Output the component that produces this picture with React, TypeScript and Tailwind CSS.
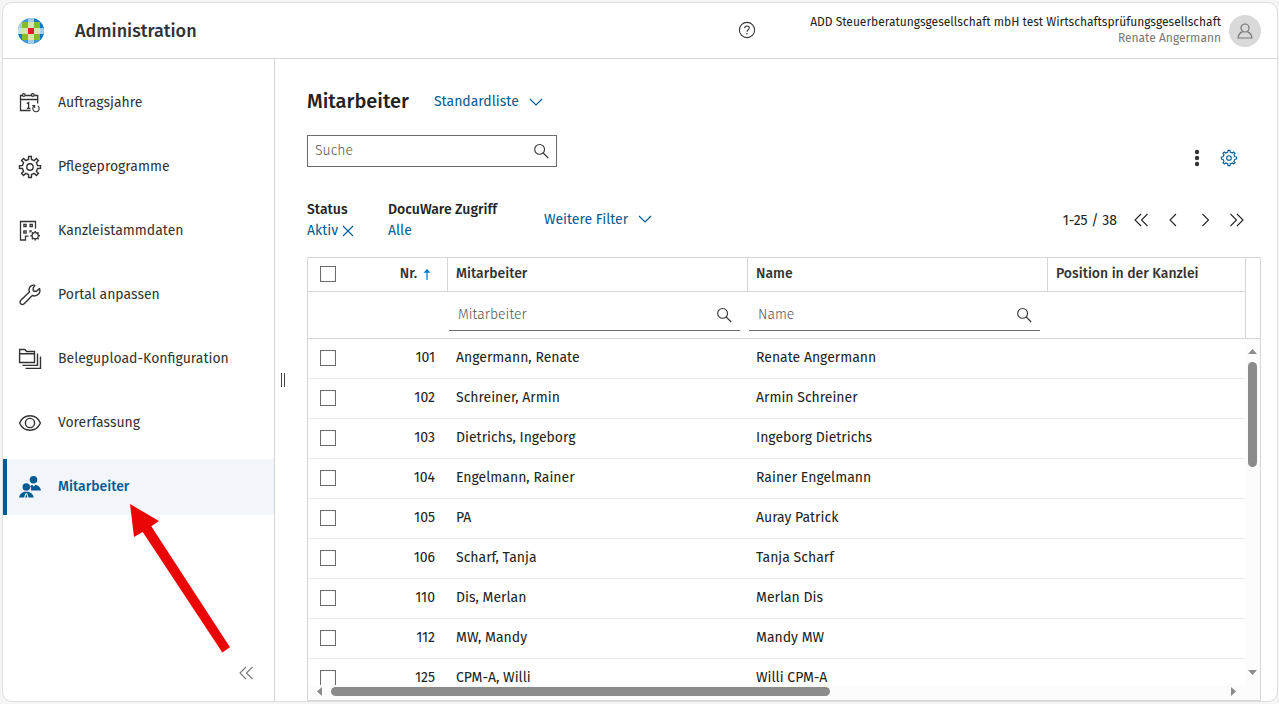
import type { ReactNode } from "react";

type IconProps = { className?: string };

function gearPath(cx: number, cy: number, outer: number, inner: number, teeth = 8) {
  const step = (Math.PI * 2) / teeth;
  const points: string[] = [];
  for (let i = 0; i < teeth; i++) {
    const a = i * step - Math.PI / 2;
    const corners: [number, number][] = [
      [a - step * 0.25, inner],
      [a - step * 0.17, outer],
      [a + step * 0.17, outer],
      [a + step * 0.25, inner],
    ];
    for (const [angle, r] of corners) {
      points.push(`${(cx + Math.cos(angle) * r).toFixed(2)} ${(cy + Math.sin(angle) * r).toFixed(2)}`);
    }
  }
  return `M${points.join("L")}Z`;
}

function Svg({ children, className, box = 24, stroke = 1.4 }: IconProps & { children: ReactNode; box?: number; stroke?: number }) {
  return (
    <svg
      viewBox={`0 0 ${box} ${box}`}
      className={className}
      fill="none"
      stroke="currentColor"
      strokeWidth={stroke}
      aria-hidden="true"
    >
      {children}
    </svg>
  );
}

const CalendarIcon = () => (
  <Svg className="size-6 shrink-0" stroke={1.3}>
    <path d="M12.5 19.5H2.5V4.5H4.2M7.3 4.5H13.2M16.3 4.5H19.7V12.5M2.5 8.5H19.7" />
    <circle cx="5.8" cy="4" r="1.4" />
    <circle cx="14.8" cy="4" r="1.4" />
    <path d="M8.8 12.6L10.6 11.6V17.3M8.8 17.3H12.4" />
    <path d="M19.8 14.9A3.2 3.2 0 1 1 15.8 15.2M14.2 14.5H16.6V17" strokeWidth="1.1" />
  </Svg>
);

const GearIcon = () => (
  <Svg className="size-6 shrink-0" stroke={1.4}>
    <path d={gearPath(12, 12, 10.6, 7.7)} />
    <circle cx="12" cy="12" r="3.2" />
  </Svg>
);

const BuildingIcon = () => (
  <Svg className="size-6 shrink-0" stroke={1.3}>
    <path d="M17.5 9.8V2.5H2.5V21H7.5V17.2H10.5" />
    <path d="M5.9 5.5H8.1V7.7H5.9ZM12.1 5.5H14.3V7.7H12.1ZM5.9 11.9H8.1V14.1H5.9Z" />
    <path d="M12 13.6V12H13.8" />
    <circle cx="17.2" cy="16.8" r="3.1" strokeWidth="1.2" />
    <path
      d="M17.2 12V13.6M17.2 20V21.6M12.4 16.8H14M20.4 16.8H22M13.8 13.4L15 14.6M19.4 19L20.6 20.2M20.6 13.4L19.4 14.6M15 19L13.8 20.2"
      strokeWidth="1.5"
    />
  </Svg>
);

const WrenchIcon = () => (
  <Svg className="size-6 shrink-0">
    <path
      strokeLinejoin="round"
      d="M16.8 2.3C13.8 1.6 11 3.8 11 6.8C11 7.6 11.1 8.3 11.4 8.9L3 17.1C1.8 18.3 1.8 19.9 2.7 20.8C3.7 21.8 5.3 21.7 6.4 20.6L14.3 12.5C17.6 13.8 21.4 11.9 21.9 8.3C22 7.3 21.9 6.4 21.5 5.6L18.6 8.3H16L15.2 7.5V5Z"
    />
  </Svg>
);

const FoldersIcon = () => (
  <Svg className="size-6 shrink-0">
    <path d="M1.6 15.5V2.5H7L8.5 4.5H16.5V15.5ZM1.6 6.8H16.5" />
    <path d="M4.5 18.4H19.5V6.5M7.5 21.4H22.5V9.5" />
  </Svg>
);

const EyeIcon = () => (
  <Svg className="size-6 shrink-0">
    <path d="M1.6 12C3.5 7.5 7.5 4.8 12 4.8S20.5 7.5 22.4 12C20.5 16.5 16.5 19.2 12 19.2S3.5 16.5 1.6 12Z" />
    <circle cx="12" cy="12" r="4.6" />
  </Svg>
);

const PeopleIcon = () => (
  <svg viewBox="0 0 24 24" className="size-6 shrink-0" fill="currentColor" aria-hidden="true">
    <circle cx="15.5" cy="4.7" r="3.8" />
    <circle cx="8.3" cy="12" r="3.8" />
    <path d="M13 15.5C13.2 13.2 12.8 11.8 12.2 10.9L14.2 9.7L15.8 11.6L17.4 9.7C20.4 10.5 22.6 12.4 23 15.5Z" />
    <path d="M1 22.5C1.4 19.5 3.6 17.4 6.5 16.8H10.2C13.1 17.4 15.3 19.5 15.7 22.5H10.6L9.6 19.2L8.3 17.8L7 19.2L6.2 22.5Z" />
    <path d="M8.3 18.8L9.4 22.5H7.3Z" />
  </svg>
);

const SearchIcon = () => (
  <Svg className="size-4 shrink-0 text-[#333]" box={16} stroke={1.1}>
    <circle cx="6.6" cy="6.4" r="4.9" />
    <path d="M10.2 10L15.2 15" />
  </Svg>
);

const ChevronDown = () => (
  <Svg className="size-3.5 shrink-0" box={14} stroke={1.2}>
    <path d="M1 4L7 10L13 4" />
  </Svg>
);

const DoubleLeft = () => (
  <Svg className="size-4" box={16} stroke={1.1}>
    <path d="M8 2L2 8L8 14M14.5 2L8.5 8L14.5 14" />
  </Svg>
);
const DoubleRight = () => (
  <Svg className="size-4" box={16} stroke={1.1}>
    <path d="M1.5 2L7.5 8L1.5 14M8 2L14 8L8 14" />
  </Svg>
);
const Left = () => (
  <Svg className="size-4" box={16} stroke={1.1}>
    <path d="M11 2L5 8L11 14" />
  </Svg>
);
const Right = () => (
  <Svg className="size-4" box={16} stroke={1.1}>
    <path d="M5.5 2L11.5 8L5.5 14" />
  </Svg>
);

function Logo() {
  return (
    <svg viewBox="0 0 26 26" className="size-[26px]" role="img" aria-label="Logo">
      <defs>
        <clipPath id="logo-clip">
          <circle cx="13" cy="13" r="13" />
        </clipPath>
      </defs>
      <g clipPath="url(#logo-clip)">
        <rect width="26" height="26" fill="#4298d6" />
        <path d="M16 0H22V4H16ZM22 4H26V10H22ZM22 16H26V22H22ZM0 16H4V22H0Z" fill="#0a7bc6" />
        <path d="M10 0H16V4H10ZM0 4H4V10H0ZM22 10H26V16H22ZM10 22H16V26H10Z" fill="#a3cdec" />
        <path d="M0 10H4V16H0Z" fill="#c9e0f2" />
        <path d="M4 4H22V22H4Z" fill="#86bc25" />
        <path d="M10 4H16V22H10ZM4 10H22V16H4Z" fill="#d2e6ae" />
        <path d="M10 10H16V16H10Z" fill="#e9192d" />
      </g>
    </svg>
  );
}

const navItems = [
  { label: "Auftragsjahre", icon: <CalendarIcon /> },
  { label: "Pflegeprogramme", icon: <GearIcon /> },
  { label: "Kanzleistammdaten", icon: <BuildingIcon /> },
  { label: "Portal anpassen", icon: <WrenchIcon /> },
  { label: "Belegupload-Konfiguration", icon: <FoldersIcon /> },
  { label: "Vorerfassung", icon: <EyeIcon /> },
  { label: "Mitarbeiter", icon: <PeopleIcon />, active: true },
];

const rows = [
  ["101", "Angermann, Renate", "Renate Angermann"],
  ["102", "Schreiner, Armin", "Armin Schreiner"],
  ["103", "Dietrichs, Ingeborg", "Ingeborg Dietrichs"],
  ["104", "Engelmann, Rainer", "Rainer Engelmann"],
  ["105", "PA", "Auray Patrick"],
  ["106", "Scharf, Tanja", "Tanja Scharf"],
  ["110", "Dis, Merlan", "Merlan Dis"],
  ["112", "MW, Mandy", "Mandy MW"],
  ["125", "CPM-A, Willi", "Willi CPM-A"],
];

const Checkbox = ({ label }: { label: string }) => (
  <input type="checkbox" aria-label={label} className="block size-4 appearance-none border border-[#6b6b6b] bg-white" />
);

const ColumnFilter = ({ label }: { label: string }) => (
  <label className="ml-px mr-2 flex h-8 items-center border-b border-[#6b6b6b] pl-[9px] pr-2">
    <input
      type="text"
      aria-label={`Filter ${label}`}
      placeholder={label}
      className="min-w-0 flex-1 bg-transparent outline-none placeholder:font-light placeholder:text-[#555]"
    />
    <SearchIcon />
  </label>
);

export default function App() {
  return (
    <div className="h-screen bg-[#f5f5f5] py-0.5 pl-0.5 pr-px font-['Fira_Sans','Noto_Sans',sans-serif] text-sm text-[#222]">
      <div className="flex h-full flex-col overflow-hidden rounded-[10px] border border-[#dedede] bg-white">
        <header className="flex h-14 shrink-0 items-center border-b border-[#d6d6d6] pl-[15px] pr-4">
          <Logo />
          <h1 className="ml-[31px] flex-1 text-lg font-medium text-[#333]">Administration</h1>
          <button type="button" aria-label="Hilfe" className="pb-0.5 text-[#333]">
            <Svg className="size-[18px]" box={18} stroke={1.1}>
              <circle cx="9" cy="9" r="7.6" />
              <path d="M6.7 7.2C6.7 4.2 11.3 4.3 11.3 7C11.3 8.8 9 8.8 9 10.8M9 12V13.4" />
            </Svg>
          </button>
          <div className="w-[465px] pb-0.5 text-right text-xs leading-4">
            <div>ADD Steuerberatungsgesellschaft mbH test Wirtschaftsprüfungsgesellschaft</div>
            <div className="text-[#777]">Renate Angermann</div>
          </div>
          <button
            type="button"
            aria-label="Benutzerkonto"
            className="ml-2 flex size-8 items-center justify-center rounded-full bg-[#d9d9d9] text-[#777]"
          >
            <Svg className="size-4" box={16} stroke={1.2}>
              <circle cx="8" cy="5" r="4" />
              <path d="M5.8 8.6C3.2 9.6 1.4 11.6 1 15H15C14.6 11.6 12.8 9.6 10.2 8.6" />
            </Svg>
          </button>
        </header>

        <div className="flex min-h-0 flex-1">
          <aside className="relative flex w-[272px] shrink-0 flex-col border-r border-[#d6d6d6] pt-4">
            <nav className="flex flex-col gap-2">
              {navItems.map((item) => (
                <a
                  key={item.label}
                  href="#"
                  aria-current={item.active ? "page" : undefined}
                  className={
                    item.active
                      ? "flex h-14 items-center gap-4 border-l-4 border-[#005b94] bg-[#f2f6fb] pl-[11px] font-medium text-[#005b94]"
                      : "flex h-14 items-center gap-4 border-l-4 border-transparent pl-[11px] text-[#333]"
                  }
                >
                  {item.icon}
                  <span>{item.label}</span>
                </a>
              ))}
            </nav>
            <button type="button" aria-label="Menü einklappen" className="mb-5 ml-auto mr-5 mt-auto text-[#777]">
              <DoubleLeft />
            </button>
            <svg
              viewBox="0 0 100 150"
              className="pointer-events-none absolute left-[127px] top-[445px] h-[150px] w-[100px]"
              aria-hidden="true"
            >
              <path d="M0 0L29 17L21.3 22.3L100 143.3L92.3 148.5L12.7 28L4 33Z" fill="#ea0606" />
            </svg>
          </aside>

          <div className="flex w-8 shrink-0 items-center gap-0.5 pl-1.5" role="separator" aria-orientation="vertical">
            <span className="h-3.5 w-px bg-[#444]" />
            <span className="h-3.5 w-px bg-[#444]" />
          </div>

          <main className="flex min-w-0 flex-1 flex-col pr-4 pt-[30px]">
            <div className="flex h-6 items-center gap-[25px]">
              <h2 className="text-xl font-medium">Mitarbeiter</h2>
              <button type="button" className="flex items-center gap-2.5 pt-0.5 text-[#005b94]">
                Standardliste
                <ChevronDown />
              </button>
            </div>

            <div className="mt-[22px] flex items-end justify-between">
              <label className="flex h-8 w-[250px] items-center border border-[#6b6b6b] px-[7px]">
                <input
                  type="search"
                  aria-label="Suche"
                  placeholder="Suche"
                  className="min-w-0 flex-1 bg-transparent outline-none placeholder:font-light placeholder:text-[#555]"
                />
                <SearchIcon />
              </label>
              <div className="flex gap-3.5 pr-[23px]">
                <button type="button" aria-label="Weitere Aktionen">
                  <svg viewBox="0 0 18 18" className="size-[18px]" fill="#333" aria-hidden="true">
                    <circle cx="9" cy="3" r="2.2" />
                    <circle cx="9" cy="9" r="2.2" />
                    <circle cx="9" cy="15" r="2.2" />
                  </svg>
                </button>
                <button type="button" aria-label="Einstellungen" className="text-[#005b94]">
                  <Svg className="size-[18px]" box={18} stroke={1.1}>
                    <path d={gearPath(9, 9, 7.7, 6)} />
                    <circle cx="9" cy="9" r="2.3" />
                  </Svg>
                </button>
              </div>
            </div>

            <div className="mt-8 flex items-center leading-[21px]">
              <div className="w-[81px]">
                <div className="font-medium">Status</div>
                <button type="button" className="flex items-center gap-1 text-[#005b94]">
                  Aktiv
                  <Svg className="size-3" box={12} stroke={1.1}>
                    <path d="M1 1L11 11M11 1L1 11" />
                  </Svg>
                </button>
              </div>
              <div className="w-[156px]">
                <div className="font-medium">DocuWare Zugriff</div>
                <button type="button" className="block text-[#005b94]">
                  Alle
                </button>
              </div>
              <button type="button" className="flex items-center gap-2.5 pb-0.5 text-[#005b94]">
                Weitere Filter
                <ChevronDown />
              </button>
              <div className="ml-auto flex items-center gap-4 pr-4">
                <span>1-25 / 38</span>
                <button type="button" aria-label="Erste Seite">
                  <DoubleLeft />
                </button>
                <button type="button" aria-label="Vorherige Seite">
                  <Left />
                </button>
                <button type="button" aria-label="Nächste Seite">
                  <Right />
                </button>
                <button type="button" aria-label="Letzte Seite">
                  <DoubleRight />
                </button>
              </div>
            </div>

            <div className="mt-4 flex min-h-0 flex-1 flex-col border border-[#d6d6d6]">
              <div className="flex min-h-0 flex-1">
                <div className="min-w-0 flex-1 overflow-hidden">
                  <table className="w-full table-fixed border-separate border-spacing-0 text-left">
                    <colgroup>
                      <col className="w-10" />
                      <col className="w-[100px]" />
                      <col className="w-[300px]" />
                      <col className="w-[300px]" />
                      <col />
                    </colgroup>
                    <thead className="text-[#333]">
                      <tr className="h-[34px]">
                        <th className="border-b border-[#d6d6d6] pb-0.5 pl-3">
                          <Checkbox label="Alle auswählen" />
                        </th>
                        <th className="border-b border-r border-[#d6d6d6] pb-0.5 pr-3.5 font-medium">
                          <span className="flex items-center justify-end gap-1">
                            Nr.
                            <svg viewBox="0 0 12 12" className="size-3" aria-hidden="true">
                              <path d="M6 1L9.5 4.7H6.6V12H5.4V4.7H2.5Z" fill="#007ac2" />
                            </svg>
                          </span>
                        </th>
                        <th className="border-b border-r border-[#d6d6d6] pb-0.5 pl-2 font-medium">Mitarbeiter</th>
                        <th className="border-b border-r border-[#d6d6d6] pb-0.5 pl-2 font-medium">Name</th>
                        <th className="border-b border-[#d6d6d6] pb-0.5 pl-2 font-medium">Position in der Kanzlei</th>
                      </tr>
                      <tr className="h-[47px]">
                        <td className="border-b border-[#d6d6d6]" colSpan={2} />
                        <td className="border-b border-[#d6d6d6]">
                          <ColumnFilter label="Mitarbeiter" />
                        </td>
                        <td className="border-b border-[#d6d6d6]">
                          <ColumnFilter label="Name" />
                        </td>
                        <td className="border-b border-[#d6d6d6]" />
                      </tr>
                    </thead>
                    <tbody>
                      {rows.map(([nr, employee, name]) => (
                        <tr key={nr} className="h-10">
                          <td className="border-b border-[#ebebeb] pb-0.5 pl-3">
                            <Checkbox label={`${employee} auswählen`} />
                          </td>
                          <td className="border-b border-[#ebebeb] pb-0.5 pr-[13px] text-right">{nr}</td>
                          <td className="border-b border-[#ebebeb] pb-0.5 pl-2">{employee}</td>
                          <td className="border-b border-[#ebebeb] pb-0.5 pl-2">{name}</td>
                          <td className="border-b border-[#ebebeb]" />
                        </tr>
                      ))}
                    </tbody>
                  </table>
                </div>
                <div className="flex w-[15px] shrink-0 flex-col">
                  <div className="h-[81px] shrink-0 border-b border-l border-[#d6d6d6]" />
                  <div className="flex min-h-0 flex-1 flex-col items-center bg-[#fcfcfc] pb-2.5 pt-2.5">
                    <svg viewBox="0 0 9 5" className="h-[5px] w-[9px] shrink-0" aria-hidden="true">
                      <path d="M0 5L4.5 0L9 5Z" fill="#8b8b8b" />
                    </svg>
                    <div className="my-2 min-h-0 flex-1">
                      <div className="h-[35%] w-[9px] rounded-full bg-[#8b8b8b]" />
                    </div>
                    <svg viewBox="0 0 9 5" className="h-[5px] w-[9px] shrink-0" aria-hidden="true">
                      <path d="M0 0L4.5 5L9 0Z" fill="#8b8b8b" />
                    </svg>
                  </div>
                </div>
              </div>
              <div className="flex h-[15px] shrink-0 items-center bg-[#fcfcfc] pb-0.5 pl-[9px] pr-6">
                <svg viewBox="0 0 5 9" className="h-[9px] w-[5px] shrink-0" aria-hidden="true">
                  <path d="M5 0L0 4.5L5 9Z" fill="#8b8b8b" />
                </svg>
                <div className="mx-[9px] min-w-0 flex-1">
                  <div className="h-[9px] w-[56%] rounded-full bg-[#8b8b8b]" />
                </div>
                <svg viewBox="0 0 5 9" className="h-[9px] w-[5px] shrink-0" aria-hidden="true">
                  <path d="M0 0L5 4.5L0 9Z" fill="#8b8b8b" />
                </svg>
              </div>
            </div>
          </main>
        </div>
      </div>
    </div>
  );
}
